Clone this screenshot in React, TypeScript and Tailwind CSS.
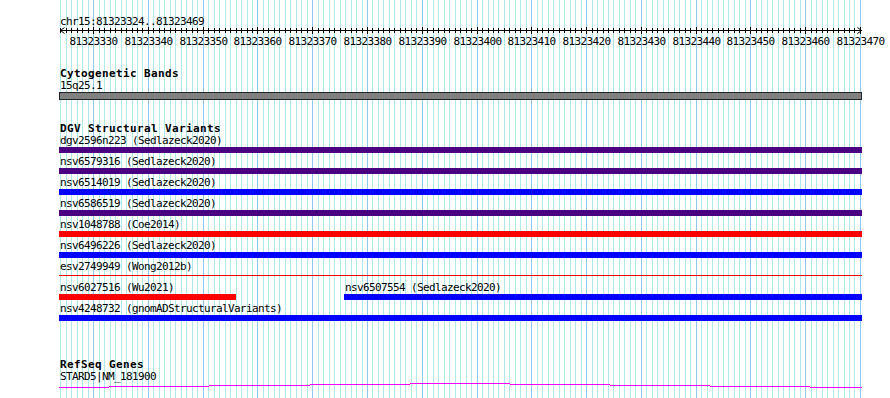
import React from 'react'

const START = 81323324
const END = 81323470

// pixel column of a base pair in the page
const px = (bp: number) => Math.round(60.3 + (bp - START) * 5.477)

const bases: number[] = []
for (let bp = START; bp <= END; bp++) bases.push(bp)

const PURPLE = 'bg-[#4b0082]'
const BLUE = 'bg-[#0000ff]'
const RED = 'bg-[#ff0000]'

type Variant = { label: string; color: string; thin?: boolean }

const variants: Variant[] = [
    { label: 'dgv2596n223 (Sedlazeck2020)', color: PURPLE },
    { label: 'nsv6579316 (Sedlazeck2020)', color: PURPLE },
    { label: 'nsv6514019 (Sedlazeck2020)', color: BLUE },
    { label: 'nsv6586519 (Sedlazeck2020)', color: PURPLE },
    { label: 'nsv1048788 (Coe2014)', color: RED },
    { label: 'nsv6496226 (Sedlazeck2020)', color: BLUE },
    { label: 'esv2749949 (Wong2012b)', color: RED, thin: true },
]

const GridLines = () => (
    <svg className="absolute left-0 top-0" width={890} height={398}>
        {bases.map((bp) => (
            <rect
                key={bp}
                x={px(bp)}
                y={0}
                width={1}
                height={398}
                fill={bp % 10 === 0 ? '#8ecaf0' : '#aeeaea'}
            />
        ))}
    </svg>
)

const Ruler = () => (
    <svg className="block overflow-visible" width={803} height={22}>
        <rect x={1} y={2} width={802} height={1} fill="#000" />
        <path d="M1.5 2.5 L5.5 -0.5 M1.5 2.5 L5.5 5.5" stroke="#000" fill="none" />
        <path d="M802.5 2.5 L798.5 -0.5 M802.5 2.5 L798.5 5.5" stroke="#000" fill="none" />
        {bases.map((bp) => {
            const major = bp % 10 === 0
            return (
                <rect
                    key={bp}
                    x={px(bp) - 59}
                    y={major ? -1 : 0}
                    width={1}
                    height={major ? 7 : 5}
                    fill="#000"
                />
            )
        })}
        {bases
            .filter((bp) => bp % 10 === 0)
            .map((bp) => (
                <text
                    key={bp}
                    x={px(bp) - 59 + 0.5}
                    y={17}
                    textAnchor="middle"
                    fontSize={11}
                    letterSpacing={-0.62}
                    fill="#000"
                >
                    {bp}
                </text>
            ))}
    </svg>
)

const GeneLine = () => {
    const segs = [
        [0, 50, 4], [50, 150, 3], [150, 251, 2], [251, 351, 1], [351, 451, 0],
        [451, 551, 1], [551, 651, 2], [651, 751, 3], [751, 803, 4],
    ]
    return (
        <svg className="block" width={803} height={6}>
            {segs.map(([a, b, y]) => (
                <rect key={a} x={a} y={y} width={b - a} height={1} fill="#ff00ff" />
            ))}
        </svg>
    )
}

const Title = ({ children }: { children: React.ReactNode }) => (
    <p className="pl-[1px] text-[11px] leading-[13px] font-bold tracking-[0.38px] text-black whitespace-nowrap">
        {children}
    </p>
)

const Label = ({ children }: { children: React.ReactNode }) => (
    <p className="pl-[1px] text-[11px] leading-[12px] tracking-[-0.62px] text-black whitespace-nowrap">
        {children}
    </p>
)

const App = () => {
    return (
        <div className="relative w-[890px] h-[398px] bg-white overflow-hidden font-['DejaVu_Sans_Mono',monospace]">
            <GridLines />

            <div className="relative w-[862px] pl-[59px]">
                {/* ruler */}
                <div className="pt-[15px] h-[50px]">
                    <p className="pl-[1px] text-[11px] leading-[13px] tracking-[-0.62px] text-black">
                        chr15:81323324..81323469
                    </p>
                    <Ruler />
                </div>

                {/* cytogenetic bands */}
                <div className="mt-[17px]">
                    <Title>Cytogenetic Bands</Title>
                    <Label>15q25.1</Label>
                    <div className="h-[8px] border border-[#222] bg-[#808080]"></div>
                </div>

                {/* DGV */}
                <div className="mt-[22px]">
                    <Title>DGV Structural Variants</Title>
                    <div className="flex flex-col gap-[3px]">
                        {variants.map((v) => (
                            <div key={v.label}>
                                <Label>{v.label}</Label>
                                {v.thin ? (
                                    <div className="h-[6px] pt-[2px]">
                                        <div className={`h-[1px] ${v.color}`}></div>
                                    </div>
                                ) : (
                                    <div className={`h-[6px] ${v.color}`}></div>
                                )}
                            </div>
                        ))}
                        <div className="flex">
                            <div className="w-[177px]">
                                <Label>nsv6027516 (Wu2021)</Label>
                                <div className={`h-[6px] ${RED}`}></div>
                            </div>
                            <div className="ml-[108px] flex-1">
                                <Label>nsv6507554 (Sedlazeck2020)</Label>
                                <div className={`h-[6px] ${BLUE}`}></div>
                            </div>
                        </div>
                        <div>
                            <Label>nsv4248732 (gnomADStructuralVariants)</Label>
                            <div className={`h-[6px] ${BLUE}`}></div>
                        </div>
                    </div>
                </div>

                {/* RefSeq */}
                <div className="mt-[37px]">
                    <Title>RefSeq Genes</Title>
                    <Label>STARD5|NM_181900</Label>
                    <GeneLine />
                </div>
            </div>
        </div>
    )
}

export default App
